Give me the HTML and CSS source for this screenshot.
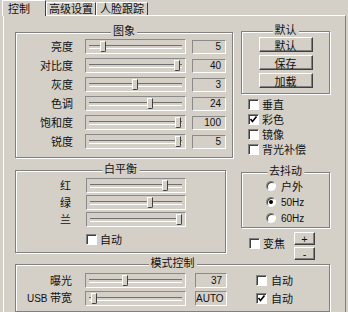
FILE: index.html
```html
<!DOCTYPE html>
<html lang="zh">
<head>
    <meta charset="UTF-8">
    <title>控制</title>
    <link rel="stylesheet" href="styles.css">
</head>
<body>
    <div class="tabs">
        <div class="tab tab-first active">控制</div>
        <div class="tab tab-second">高级设置</div>
        <div class="tab tab-third">人脸跟踪</div>
    </div>
    <div class="panel">
        <div class="row">
            <div class="group image-group">
                <span class="title">图象</span>
                <div class="srow"><span class="lbl">亮度</span><div class="slider"><span class="thumb" style="left:14px"></span></div><div class="val">5</div></div>
                <div class="srow"><span class="lbl">对比度</span><div class="slider"><span class="thumb" style="left:88px"></span></div><div class="val">40</div></div>
                <div class="srow"><span class="lbl">灰度</span><div class="slider"><span class="thumb" style="left:46px"></span></div><div class="val">3</div></div>
                <div class="srow"><span class="lbl">色调</span><div class="slider"><span class="thumb" style="left:61px"></span></div><div class="val">24</div></div>
                <div class="srow"><span class="lbl">饱和度</span><div class="slider"><span class="thumb" style="left:89px"></span></div><div class="val">100</div></div>
                <div class="srow"><span class="lbl">锐度</span><div class="slider"><span class="thumb" style="left:89px"></span></div><div class="val">5</div></div>
            </div>
            <div class="side side-top">
                <div class="group default-group">
                    <span class="title">默认</span>
                    <button class="btn">默认</button>
                    <button class="btn">保存</button>
                    <button class="btn">加载</button>
                </div>
                <div class="checks">
                    <div class="crow"><span class="cb"></span><span>垂直</span></div>
                    <div class="crow"><span class="cb"><svg width="9" height="9" viewBox="0 0 9 9"><polyline points="1.5,4 3.5,6.5 7.5,1.5" fill="none" stroke="#000" stroke-width="1.6"/></svg></span><span>彩色</span></div>
                    <div class="crow"><span class="cb"></span><span>镜像</span></div>
                    <div class="crow"><span class="cb"></span><span>背光补偿</span></div>
                </div>
            </div>
        </div>

        <div class="row row-mid">
            <div class="group wb-group">
                <span class="title">白平衡</span>
                <div class="srow"><span class="lbl">红</span><div class="slider"><span class="thumb" style="left:75px"></span></div></div>
                <div class="srow"><span class="lbl">绿</span><div class="slider"><span class="thumb" style="left:60px"></span></div></div>
                <div class="srow"><span class="lbl">兰</span><div class="slider"><span class="thumb" style="left:89px"></span></div></div>
                <div class="crow wb-auto"><span class="cb"></span><span>自动</span></div>
            </div>
            <div class="side side-mid">
                <div class="group flicker-group">
                    <span class="title">去抖动</span>
                    <div class="rrow"><span class="rb"></span><span>户外</span></div>
                    <div class="rrow"><span class="rb on"></span><span class="latin">50Hz</span></div>
                    <div class="rrow"><span class="rb"></span><span class="latin">60Hz</span></div>
                </div>
                <div class="zoom-row">
                    <div class="crow"><span class="cb"></span><span>变焦</span></div>
                    <div class="zoom-btns">
                        <button class="btn small">+</button>
                        <button class="btn small">-</button>
                    </div>
                </div>
            </div>
        </div>

        <div class="group mode-group">
            <span class="title">模式控制</span>
            <div class="srow"><span class="lbl">曝光</span><div class="slider"><span class="thumb" style="left:36px"></span></div><div class="val">37</div><span class="cb"></span><span class="cb-text">自动</span></div>
            <div class="srow"><span class="lbl"><span class="latin">USB</span> 带宽</span><div class="slider"><span class="thumb" style="left:5px"></span></div><div class="val">AUTO</div><span class="cb"><svg width="9" height="9" viewBox="0 0 9 9"><polyline points="1.5,4 3.5,6.5 7.5,1.5" fill="none" stroke="#000" stroke-width="1.6"/></svg></span><span class="cb-text">自动</span></div>
        </div>
    </div>
</body>
</html>
```

FILE: styles.css
```css
* {
    box-sizing: border-box;
}
body {
    margin: 0;
    width: 348px;
    height: 312px;
    overflow: hidden;
    background: #d4d0c8;
    font-family: "Noto Sans CJK SC", "DejaVu Sans", sans-serif;
    font-size: 11px;
    line-height: 13px;
    color: #111;
}
.latin {
    font-family: "Liberation Sans", Arial, sans-serif;
    font-size: 10px;
}

/* tab strip */
.tabs {
    display: flex;
    align-items: flex-end;
    height: 15px;
    padding-left: 2px;
    position: relative;
    z-index: 1;
}
.tab {
    height: 13px;
    border-top: 1px solid #fff;
    border-left: 1px solid #fff;
    border-right: 1px solid #404040;
    text-align: center;
    line-height: 11px;
    background: #d4d0c8;
}
.tab.active {
    height: 16px;
    margin-bottom: -1px;
    line-height: 14px;
}
.tab-first {
    width: 44px;
    text-align: left;
    padding-left: 5px;
}
.tab-second {
    width: 50px;
}
.tab-third {
    width: 52px;
}

/* main panel */
.panel {
    margin-left: 3px;
    width: 343px;
    height: 297px;
    border-top: 1px solid #fff;
    border-left: 1px solid #fff;
    border-right: 1px solid #808080;
    padding: 15px 0 0 11px;
}
.row {
    display: flex;
    align-items: flex-start;
}
.row-mid {
    margin-top: 12px;
}

/* etched group box */
.group {
    position: relative;
    border: 1px solid #808080;
    box-shadow: inset 1px 1px 0 #fff, 1px 1px 0 #fff;
}
.title {
    position: absolute;
    top: -8px;
    left: 50%;
    transform: translateX(-50%);
    padding: 0 2px;
    background: #d4d0c8;
    white-space: nowrap;
    line-height: 10px;
}

/* slider rows */
.srow {
    display: flex;
    align-items: center;
    height: 19px;
}
.lbl {
    width: 57px;
    text-align: right;
    white-space: nowrap;
}
.slider {
    position: relative;
    width: 101px;
    height: 15px;
    margin-left: 12px;
    border: 1px solid;
    border-color: #8a8a8a #fff #fff #8a8a8a;
}
.slider::before {
    content: "";
    position: absolute;
    left: 3px;
    right: 3px;
    top: 5px;
    height: 2px;
    border-top: 1px solid #707070;
    border-bottom: 1px solid #fff;
}
.thumb {
    position: absolute;
    top: 1px;
    width: 6px;
    height: 11px;
    background: #d4d0c8;
    border-top: 1px solid #fff;
    border-left: 1px solid #fff;
    border-right: 1px solid #404040;
    border-bottom: 1px solid #404040;
    border-radius: 0 0 2px 2px;
}
.val {
    width: 34px;
    height: 14px;
    margin-left: 6px;
    padding-right: 4px;
    border: 1px solid;
    border-color: #8a8a8a #fff #fff #8a8a8a;
    text-align: right;
    font-family: "Liberation Sans", Arial, sans-serif;
    font-size: 10px;
    line-height: 12px;
}

.image-group {
    width: 218px;
    margin-top: 1px;
    padding: 4px 0 6px;
}

/* right column */
.side {
    width: 90px;
}
.side-top {
    margin-left: 8px;
}
.side-mid {
    margin-left: 15px;
}
.default-group {
    width: 89px;
    padding: 5px 0 5px;
    display: flex;
    flex-direction: column;
    align-items: center;
    gap: 3px;
}
.btn {
    width: 54px;
    height: 15px;
    padding: 0;
    border: 1px solid;
    border-color: #fff #404040 #404040 #fff;
    box-shadow: inset -1px -1px 0 #808080;
    background: #d4d0c8;
    font-family: inherit;
    font-size: 11px;
    line-height: 12px;
    color: #111;
}
.btn.small {
    width: 21px;
    height: 13px;
    font-family: "Liberation Sans", Arial, sans-serif;
    line-height: 10px;
}

.checks {
    margin-top: 3px;
    padding-left: 7px;
}
.crow {
    display: flex;
    align-items: center;
    height: 15px;
    gap: 3px;
}
.cb {
    width: 11px;
    height: 11px;
    flex-shrink: 0;
    display: grid;
    place-items: center;
    border: 1px solid;
    border-color: #808080 #fff #fff #808080;
    box-shadow: inset 1px 1px 0 #404040;
    background: #fff;
}

/* white balance */
.wb-group {
    width: 211px;
    padding: 6px 0 5px;
}
.wb-group .srow {
    height: 17px;
}
.wb-group .lbl {
    width: 55px;
}
.wb-group .slider {
    width: 100px;
    margin-left: 15px;
}
.wb-auto {
    margin: 4px 0 0 70px;
}

/* anti flicker */
.flicker-group {
    width: 89px;
    margin-top: 2px;
    padding: 5px 0 1px 24px;
}
.rrow {
    display: flex;
    align-items: center;
    height: 16px;
    gap: 5px;
}
.rb {
    position: relative;
    width: 10px;
    height: 10px;
    border-radius: 50%;
    border: 1px solid;
    border-color: #808080 #fff #fff #808080;
    box-shadow: inset 1px 1px 0 #404040;
    background: #fff;
}
.rb.on::after {
    content: "";
    position: absolute;
    left: 2px;
    top: 2px;
    width: 4px;
    height: 4px;
    border-radius: 50%;
    background: #000;
}
.zoom-row {
    display: flex;
    align-items: flex-start;
    margin-top: 4px;
    padding-left: 8px;
}
.zoom-row .crow {
    margin-top: 4px;
}
.zoom-btns {
    display: flex;
    flex-direction: column;
    gap: 2px;
    margin-left: auto;
    margin-right: 16px;
}

/* mode control */
.mode-group {
    width: 315px;
    margin-top: 4px;
    padding: 6px 0 4px;
}
.mode-group .srow {
    height: 18px;
}
.mode-group .lbl {
    width: 56px;
}
.mode-group .slider {
    margin-left: 13px;
}
.mode-group .val {
    width: 32px;
    height: 15px;
    margin-left: 9px;
    line-height: 13px;
}
.mode-group .cb {
    margin-left: 29px;
}
.cb-text {
    margin-left: 4px;
}
```
